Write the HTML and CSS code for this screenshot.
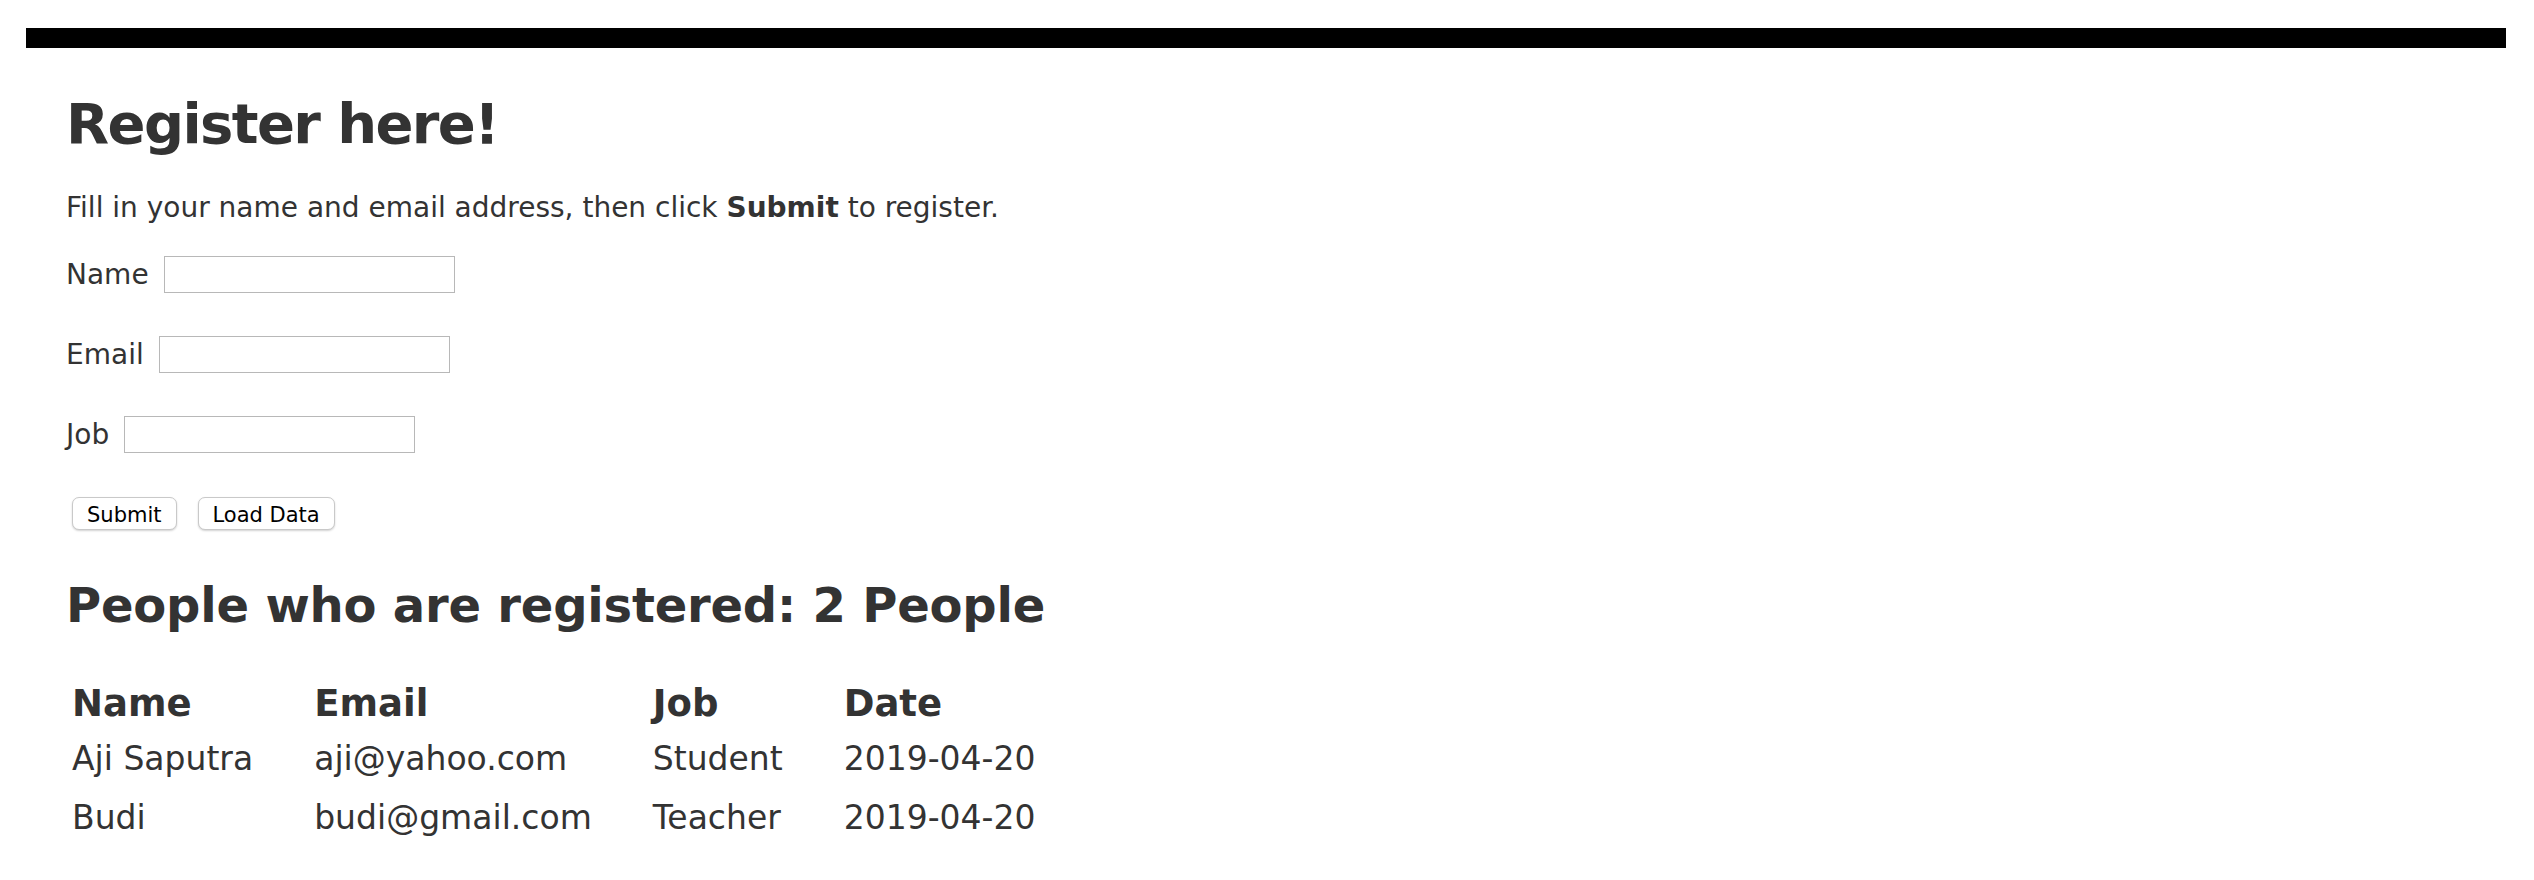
FILE: index.html
```html
<!DOCTYPE html>
<html lang="en">
<head>
<meta charset="utf-8">
<title>Register here!</title>
<link rel="stylesheet" href="styles.css">
</head>
<body>
<div class="topbar"></div>
<main class="page">
  <h1 class="title">Register here!</h1>
  <p class="intro">Fill in your name and email address, then click <strong>Submit</strong> to register.</p>
  <form class="reg-form">
    <div class="field"><label for="name">Name</label><input id="name" type="text"></div>
    <div class="field"><label for="email">Email</label><input id="email" type="text"></div>
    <div class="field"><label for="job">Job</label><input id="job" type="text"></div>
    <div class="actions">
      <button type="button" class="btn">Submit</button>
      <button type="button" class="btn">Load Data</button>
    </div>
  </form>
  <h2 class="subtitle">People who are registered: 2 People</h2>
  <table class="people">
    <thead>
      <tr><th>Name</th><th>Email</th><th>Job</th><th>Date</th></tr>
    </thead>
    <tbody>
      <tr><td>Aji Saputra</td><td>aji@yahoo.com</td><td>Student</td><td>2019-04-20</td></tr>
      <tr><td>Budi</td><td>budi@gmail.com</td><td>Teacher</td><td>2019-04-20</td></tr>
    </tbody>
  </table>
</main>
</body>
</html>
```

FILE: styles.css
```css
html, body {
  background: #fff;
}
body {
  margin: 0;
  font-family: "DejaVu Sans", Verdana, sans-serif;
  color: #333;
}
.topbar {
  height: 20px;
  background: #000;
  margin: 28px 28px 0 26px;
}
.page {
  padding: 0 66px;
}
.title {
  font-size: 56px;
  line-height: 65px;
  font-weight: bold;
  letter-spacing: -1.6px;
  margin: 43px 0 0;
}
.intro {
  font-size: 28px;
  line-height: 33px;
  margin: 35px 0 0;
}
.reg-form {
  margin-top: 32px;
}
.field {
  display: flex;
  align-items: center;
  gap: 15px;
  height: 37px;
  margin-bottom: 43px;
  font-size: 28px;
  line-height: 33px;
}
.field input {
  box-sizing: border-box;
  width: 291px;
  height: 37px;
  margin: 0;
  border: 1px solid #b8b8b8;
  background: #fff;
  padding: 2px 6px;
  font: 24px "DejaVu Sans", sans-serif;
}
.actions {
  display: flex;
  gap: 21px;
  margin-left: 6px;
  padding-top: 1px;
}
.btn {
  box-sizing: border-box;
  display: flex;
  align-items: center;
  height: 33px;
  padding: 2px 14px 0;
  margin: 0;
  font-family: "DejaVu Sans", sans-serif;
  font-size: 21px;
  line-height: 28px;
  color: #000;
  background: #fff;
  border: 1px solid #c9c9c9;
  border-radius: 7px;
  box-shadow: 0 1px 2px rgba(0, 0, 0, 0.18);
}
.subtitle {
  font-size: 48px;
  line-height: 56px;
  font-weight: bold;
  letter-spacing: -0.2px;
  margin: 47px 0 0;
}
.people {
  margin: 45px 0 0 6px;
  border-collapse: separate;
  border-spacing: 0;
}
.people th {
  font-size: 37px;
  line-height: 43px;
  font-weight: bold;
  text-align: left;
  padding: 4px 61px 5px 0;
}
.people td {
  font-size: 33px;
  line-height: 38px;
  padding: 10px 61px 11px 0;
}
```
